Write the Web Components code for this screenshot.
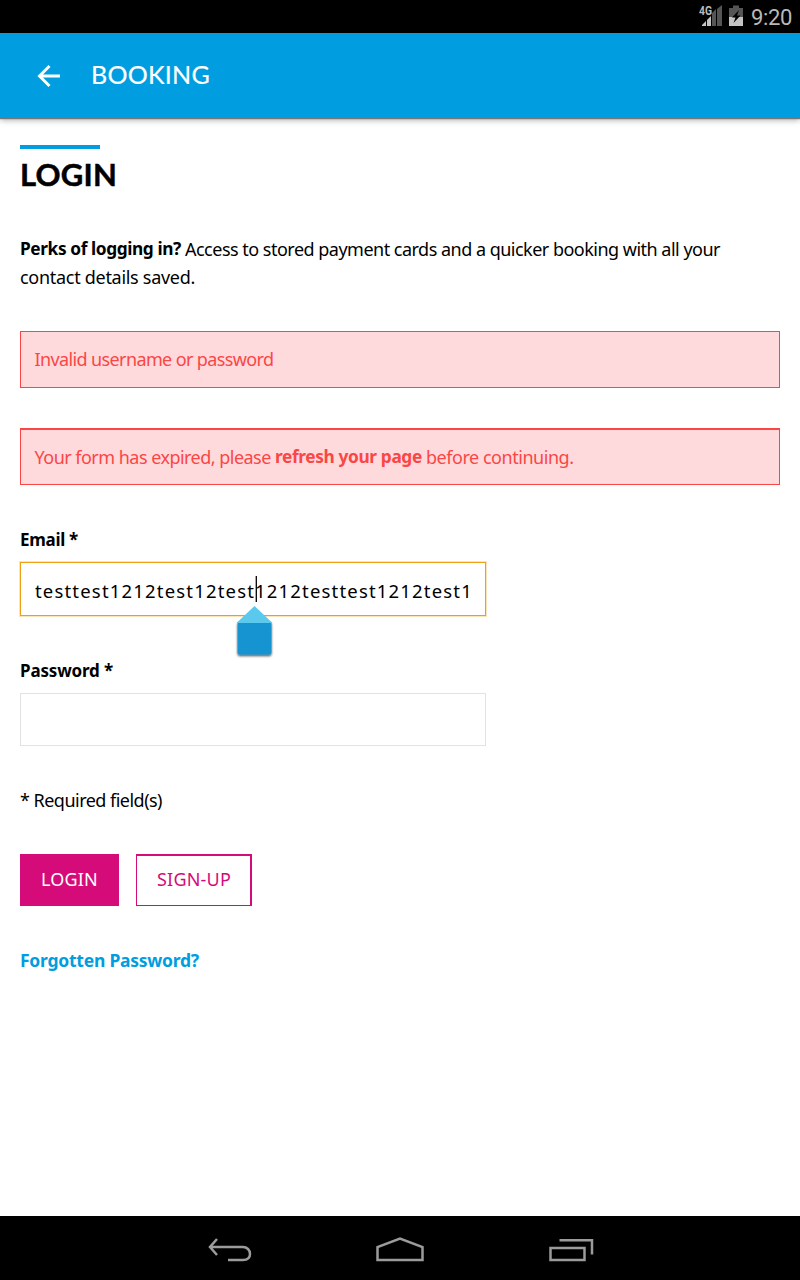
<!DOCTYPE html>
<html lang="en"><head><meta charset="utf-8"><title>Booking</title>
<style>body{margin:0;background:#fff}</style></head><body>
<booking-screen></booking-screen>
<script>
const define=(name,html,ready)=>customElements.define(name,class extends HTMLElement{
  connectedCallback(){ if(this.shadowRoot)return;
    this.attachShadow({mode:'open'}).innerHTML=html; if(ready)ready.call(this); }
});
/* One run of text, tracked to fill the given width */
define('tracked-text',`<style>:host{display:inline-block;white-space:pre}span{display:inline-block}</style><span><slot></slot></span>`,function(){
  const s=this.shadowRoot.querySelector('span'), w=+this.getAttribute('w'), n=this.textContent.length;
  this.style.width=w+'px';
  s.style.letterSpacing=((w-s.getBoundingClientRect().width)/n)+'px';
});
define('status-bar',`<style>:host{display:flex;height:33px;background:#000;color:#b9b9b9;justify-content:flex-end;padding-right:8px;box-sizing:border-box;font:22px/36px Roboto,sans-serif}
svg{display:block;flex:none}.sig{margin-right:6px}.bat{margin-right:8px}tracked-text{height:33px}</style>
<svg class="sig" width="25" height="33" viewBox="0 0 25 33"><path d="M4 26V25L8 21V26ZM9 26V20L13 16V26Z" fill="#c4c4c4"/><path d="M14 26V13L18 9V26ZM19 26V9L24 5V26Z" fill="#555"/><text x="1" y="15" font-family="Roboto" font-size="12" font-weight="700" textLength="13" lengthAdjust="spacingAndGlyphs" fill="#bbb">4G</text></svg>
<svg class="bat" width="14" height="33" viewBox="0 0 14 33"><path d="M4 5.500H10V8H14V17H0V8H4Z" fill="#555"/><path d="M0 17H14V26H0Z" fill="#c4c4c4"/><path d="M10 10 3 17.500H6.500L4.500 23 11.500 15.500H8Z" fill="#000"/></svg>
<tracked-text w="41">9:20</tracked-text>`);
define('app-bar',`<style>:host{display:flex;align-items:center;height:85px;background:#009de0;color:#fff;padding-left:37px;box-sizing:border-box;font:25px/83px Lato,sans-serif;-webkit-text-stroke:.2px #fff;box-shadow:0 1px 1px #777,0 2px 6px #0005}
svg{margin-right:30px}::slotted(*){padding-bottom:2px}</style><svg width="24" height="24" viewBox="0 0 24 24"><path d="M12.500 2 2.500 12 12.500 22M2.500 12H23" fill="none" stroke="#fff" stroke-width="2.900"/></svg><slot></slot>`);
define('page-title',`<style>:host{display:block;font:700 31px/40px Lato,sans-serif;-webkit-text-stroke:.5px #000;height:44px}i{display:block;width:80px;height:4px;background:#009de0;margin-bottom:5px}</style><i></i><slot></slot>`);
define('error-box',`<style>:host{display:block;height:57px;box-sizing:border-box;border:1px solid #fb4645;background:#ffdadd;color:#fb4645;padding-left:13.500px;line-height:55px;white-space:nowrap}:host([heavy]){border-top-width:2px;line-height:54px}</style><slot></slot>`);
define('form-field',`<style>:host{display:block;width:466px;position:relative}label{display:block;height:37px;line-height:29px;font-weight:700;font-size:17px}
.box{height:53px;box-sizing:border-box;border:1px solid #e2e2e2;padding-left:14px;line-height:55px;font-size:18.500px}
:host([focused]) .box{height:54px;margin-bottom:-1px;border-color:#ee9f14;box-shadow:0 0 0 1px #f5c97380}</style><label><slot name="label"></slot></label><div class="box"><slot></slot></div><slot name="handle"></slot>`);
define('cursor-handle',`<style>:host{position:absolute;left:214px;top:51px}svg{display:block}</style>
<svg width="42" height="90" viewBox="0 0 42 90"><defs><filter id="s" x="-30%" y="-30%" width="160%" height="160%"><feDropShadow dx="0" dy="1.500" stdDeviation="1.200" flood-opacity=".7"/></filter></defs>
<path d="M22.300 0V26" stroke="#000" stroke-width="1.300"/>
<path d="M3.500 46H37.500V76.500Q37.500 78.500 35.500 78.500H5.500Q3.500 78.500 3.500 76.500Z" fill="#1893d1" filter="url(#s)"/><path d="M3.500 47V46L20.500 30 37.500 46V47Z" fill="#5bc8ee"/></svg>`);
define('action-button',`<style>:host{display:block;box-sizing:border-box;height:52px;line-height:51px;color:#fff;background:#d60b7a;width:98.500px;padding-left:21px;white-space:nowrap}
:host([outline]){width:116px;background:#fff;color:#d60b7a;border:solid #d60b7a;border-width:2px 2px 1px 1px;line-height:47px;padding-left:20px}</style><slot></slot>`);
define('nav-bar',`<style>:host{display:flex;height:64px;background:#000;align-items:center;box-sizing:border-box}svg{display:block;width:100%;height:64px}g{fill:none;stroke:#9b9b9b;stroke-width:2.500}</style>
<svg viewBox="0 0 800 64"><g><path d="M217 23 210 31 217 39M210 31H243C247 31 250 34 250 38C250 42 247 44 243 44H228"/><path d="M377.500 44V31L400 22.500 422.500 31V44Z"/><path d="M550.500 32H584.500V44H550.500ZM559.500 24.200H592V38.500"/></g></svg>`);
define('booking-screen',`<style>:host{display:flex;flex-direction:column;width:800px;height:1280px;background:#fff;color:#000;font:18px/28px "Noto Sans",sans-serif;overflow:hidden}
main{flex:1;padding:27px 20px 0}tracked-text{vertical-align:top}.intro{margin:46px 0 40px;height:56px}.l{white-space:nowrap;height:28px}error-box{margin-bottom:40px}form-field{margin-bottom:41px}.row{display:flex;gap:17.500px;margin:40px 0}b{font-weight:700;font-size:17.300px}a{color:#009de0;font-weight:700;font-size:17.500px}</style>
<status-bar></status-bar><app-bar><tracked-text w="119">BOOKING</tracked-text></app-bar>
<main><page-title><tracked-text w="97">LOGIN</tracked-text></page-title>
<div class="intro"><div class="l"><b><tracked-text w="165">Perks of logging in? </tracked-text></b><tracked-text w="535">Access to stored payment cards and a quicker booking with all your</tracked-text></div><div class="l"><tracked-text w="175">contact details saved.</tracked-text></div></div>
<error-box><tracked-text w="239">Invalid username or password</tracked-text></error-box>
<error-box heavy><tracked-text w="240.500">Your form has expired, please </tracked-text><b><tracked-text w="151">refresh your page </tracked-text></b><tracked-text w="147.500">before continuing.</tracked-text></error-box>
<form-field focused><tracked-text slot="label" w="58">Email *</tracked-text><tracked-text w="438">testtest1212test12test1212testtest1212test1</tracked-text><cursor-handle slot="handle"></cursor-handle></form-field>
<form-field><tracked-text slot="label" w="93">Password *</tracked-text></form-field>
<div class="l" style="margin-top:-1px"><tracked-text w="142">* Required field(s)</tracked-text></div>
<div class="row"><action-button><tracked-text w="57">LOGIN</tracked-text></action-button><action-button outline><tracked-text w="74">SIGN-UP</tracked-text></action-button></div>
<a><tracked-text w="179">Forgotten Password?</tracked-text></a></main><nav-bar></nav-bar>`);
</script></body></html>
